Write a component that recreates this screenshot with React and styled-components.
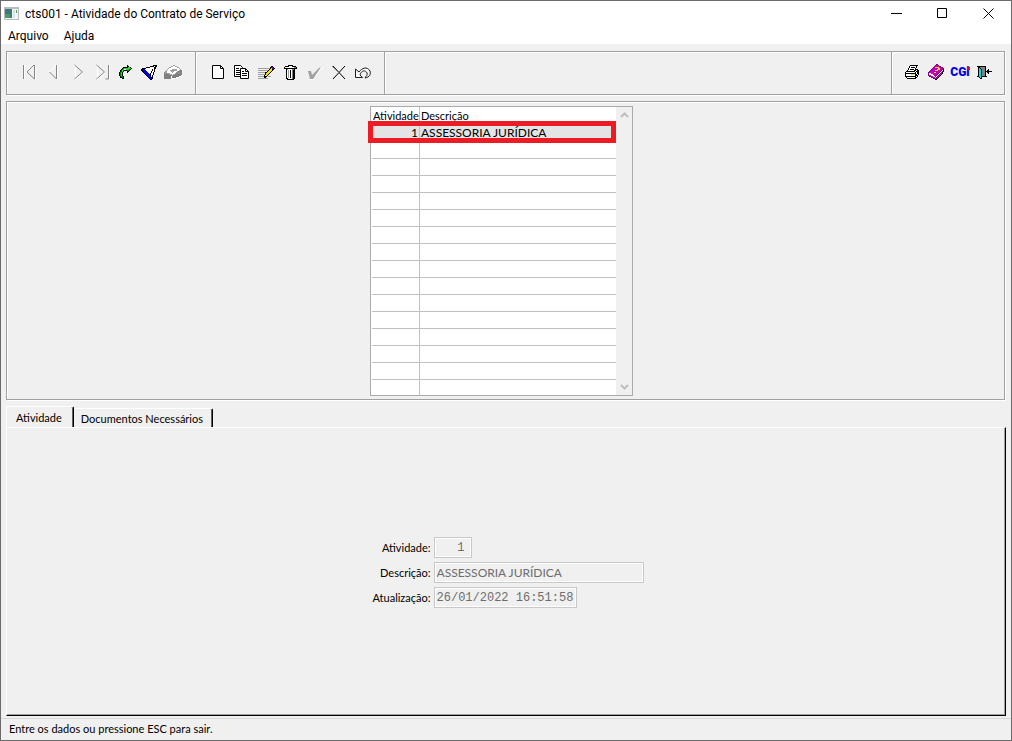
import React, {useState} from 'react'
import styled, {createGlobalStyle} from "styled-components"

const GlobalStyle = createGlobalStyle`
    *, *::before, *::after { box-sizing: border-box; }
    body {
        margin: 0;
        background: #f0f0f0;
        color: #000;
        font-family: Lato, "Liberation Sans", sans-serif;
        font-size: 11px;
    }
    button, input { font: inherit; color: inherit; }
`

const Window = styled.div`
    display: flex;
    flex-direction: column;
    min-height: 100vh;
    border: 1px solid #6b6b6b;
`
const TitleBar = styled.header`
    display: flex;
    align-items: center;
    height: 25px;
    padding-left: 3px;
    background: #fff;
`
const Title = styled.h1`
    flex: 1;
    margin: 0 0 0 6px;
    font: 400 12px Roboto, sans-serif;
`
const WindowButton = styled.button`
    display: flex;
    align-items: center;
    justify-content: center;
    width: 46px;
    height: 25px;
    padding: 0;
    border: 0;
    background: transparent;
`
const MenuBar = styled.nav`
    display: flex;
    gap: 15px;
    height: 18px;
    padding-left: 7px;
    background: #fff;
`
const MenuItem = styled.button`
    padding: 0;
    border: 0;
    background: transparent;
    font: 400 12px/20px Roboto, sans-serif;
`
const Body = styled.main`
    flex: 1;
    display: flex;
    flex-direction: column;
    padding: 7px 5px 2px 5px;
`
const Toolbar = styled.div`
    display: flex;
    margin-right: 1px;
    border: 1px solid #a0a0a0;
    box-shadow: 1px 1px 0 #fff, inset 1px 1px 0 #fff;
`
const ToolGroup = styled.div`
    display: flex;
    align-items: center;
    height: 42px;
    padding: 0 10px 2px;
    ${p => p.$end
        ? "margin-left: auto; padding: 0 8px 2px; border-left: 1px solid #a0a0a0; box-shadow: inset 1px 0 0 #fff;"
        : "border-right: 1px solid #a0a0a0; box-shadow: 1px 0 0 #fff;"}
`
const ToolButton = styled.button`
    display: flex;
    align-items: center;
    justify-content: center;
    width: 24px;
    height: 24px;
    padding: 0;
    border: 0;
    background: transparent;
`
const Logo = styled.span`
    position: relative;
    color: #0000f0;
    font: 900 12px/24px Roboto, sans-serif;

    &::after {
        content: "";
        position: absolute;
        top: 7px;
        right: 0;
        width: 3px;
        height: 3px;
        background: #f00;
    }
`
const GridPanel = styled.section`
    display: flex;
    justify-content: center;
    margin: 6px 1px 0 0;
    padding: 4px 8px 3px 0;
    border: 1px solid #a0a0a0;
    box-shadow: 1px 1px 0 #fff, inset 1px 1px 0 #fff;
`
const GridBox = styled.div`
    display: flex;
    padding-left: 1px;
    border: 1px solid #a9a9ae;
    background: #fff;
`
const Grid = styled.table`
    width: 244px;
    table-layout: fixed;
    border-collapse: separate;
    border-spacing: 0;
    line-height: 16px;

    th, td {
        height: 17px;
        padding: 0 0 0 1px;
        border-bottom: 1px solid #c0c0c0;
        font-weight: 400;
        text-align: left;
        white-space: nowrap;
    }
    th { height: 18px; }
    td { font-size: 12px; }
    th:first-child, td:first-child { width: 48px; border-right: 1px solid #c0c0c0; }
    td:first-child { padding-right: 1px; text-align: right; }
    tbody tr:last-child td { height: 15px; line-height: 15px; border-bottom: 0; }
`
const Row = styled.tr`
    position: relative;
    z-index: ${p => p.$marked ? 1 : 0};
    background: ${p => p.$marked ? "#e4e4e4" : "#fff"};
`
const Marker = styled.span`
    position: absolute;
    top: -4px;
    right: 0;
    bottom: -1px;
    left: -4px;
    border: 5px solid #ed1c24;
    pointer-events: none;
`
const ScrollBar = styled.div`
    display: flex;
    flex-direction: column;
    justify-content: space-between;
    width: 16px;
    background: #f0f0f0;
`
const ScrollButton = styled.button`
    display: flex;
    align-items: center;
    justify-content: center;
    height: 17px;
    padding: 0;
    border: 0;
    background: transparent;
`
const Tabs = styled.div`
    display: flex;
    align-items: flex-end;
    margin-top: 6px;
`
const Tab = styled.button`
    height: ${p => p.$active ? 22 : 19}px;
    margin-bottom: ${p => p.$active ? -1 : 0}px;
    padding: ${p => p.$active ? "0 11px 0 9px" : "0 9px 0 7px"};
    border: solid;
    border-width: 1px 1px 0 ${p => p.$active ? 1 : 0}px;
    border-color: #fff #000 #fff #fff;
    border-radius: 2px 2px 0 0;
    box-shadow: inset -1px 0 0 #606060;
    background: #f0f0f0;
    line-height: 19px;
    white-space: nowrap;
`
const TabPanel = styled.section`
    flex: 1;
    display: flex;
    align-items: center;
    justify-content: center;
    padding: 2px 0 0 4px;
    border: 1px solid;
    border-color: #fff #000 #000 #fff;
    box-shadow: inset -1px -1px 0 #a0a0a0;
`
const Form = styled.form`
    display: grid;
    grid-template-columns: auto 210px;
    gap: 4px 3px;
    align-items: center;
`
const Label = styled.label`
    text-align: right;
    white-space: nowrap;
`
const Field = styled.input`
    width: ${p => p.$width}px;
    height: 21px;
    padding: 0 2px;
    border: 1px solid #c8c8c8;
    box-shadow: inset 0 0 0 1px #fff;
    border-radius: 0;
    background: #f0f0f0;
    color: #6d6d6d;
    font-size: 12px;
    ${p => p.$mono && `font-family: "Liberation Mono", monospace;`}
    ${p => p.$right && "padding-right: 6px; text-align: right;"}
`
const StatusBar = styled.footer`
    height: 22px;
    padding-left: 8px;
    border-top: 1px solid #d7d7d7;
    line-height: 20px;
`

const COLORS = {
    k: "#000", w: "#fff", g: "#808080", s: "#a0a0a0", b: "#0000f0", n: "#008000",
    l: "#30d030", y: "#f0e000", m: "#c000c0", p: "#800080", c: "#00e0e0",
}

// draws rows of colour letters, one letter per pixel
const Bitmap = ({rows}) => {
    const width = Math.max(...rows.map(r => r.length))
    const rects = []
    rows.forEach((row, y) => {
        for (let x = 0; x < row.length;) {
            let end = x + 1
            while (row[end] === row[x]) end++
            if (COLORS[row[x]]) {
                rects.push(<rect key={x + "-" + y} x={x} y={y} width={end - x} height="1" fill={COLORS[row[x]]} />)
            }
            x = end
        }
    })
    return <svg width={width} height={rows.length} shapeRendering="crispEdges" aria-hidden="true">{rects}</svg>
}

const Svg = ({size = 24, children}) => (
    <svg width={size} height={size} viewBox={`0 0 ${size} ${size}`} fill="none" aria-hidden="true">{children}</svg>
)

const REDO = [
    "........k....",
    "........kk...",
    "....kkkkkllk.",
    "...knlllllllk",
    "..knlwwlllnk.",
    ".knlnkkknnk..",
    ".knlk...kk...",
    "knlk....k....",
    "knlk.........",
    "knlk.........",
    "knlk.........",
    ".knnk........",
    ".kknk........",
    "...kk........",
]
const FILTER = [
    "............kkkk",
    ".........kkkkwkk",
    ".....kkkkwwwwkk.",
    ".kkkkwwwwwwwwkk.",
    "kkbbwwwwwwwkwk..",
    "kkbbbwwwwwwkwk..",
    ".kkbbbwwwwkwwk..",
    "..kbbbbwwwkwk...",
    "...kbbbbwkwwk...",
    "....kbbbbkwwk...",
    ".....kbbbkwk....",
    "......kbbbwk....",
    ".......kbbkk....",
    "........kbbk....",
    ".........kk.....",
]
const BOX = [
    ".........ss.......",
    ".......sswwss.....",
    ".....sswwwwwwss...",
    "....swwwwwwwwwws..",
    "...swwwwssssswwws.",
    "..swwwssssssswwsgg",
    ".sswwwwssswwwsgggg",
    "ssswwwwwswwwsggsgg",
    "gsgssswwwwwsggsggg",
    "gggggssswssggggggg",
    "ggggggggsggggggggw",
    "gggggggwgggggggww.",
    "gggggggwggggwww...",
    "gggggggwwww.......",
]
const EDIT = [
    ".............kk.",
    "............kppk",
    "sssssssssssskyppk",
    "...........kyykk",
    "sssssssssskyyyk.",
    ".........kyyyk..",
    "ssssssskkyyyk...",
    ".......kyyyk....",
    "ssssssskyyk.....",
    "......kwyk......",
    "sssssskkk.sss...",
    "......kk........",
    "ssssssssss......",
]
const TRASH = [
    "....kkkkk....",
    ".kkkkwwwkkkk.",
    "kwwwwwwwwwggk",
    "kkkkkkkkkkkkk",
    "..kswwwwggk..",
    "..kwswkwgkk..",
    "..kwswkwgkk..",
    "..kwswkwgkk..",
    "..kwswkwgkk..",
    "..kwswkwgkk..",
    "..kwswkwgkk..",
    "..kwswkwgkk..",
    "..kwswkwgkk..",
    "..kkwwwwgkk..",
    "...kkkkkkk...",
]
const PRINT = [
    ".....kkkkkkkk.",
    "....kwwwwwwk..",
    "....kwkkkkwk..",
    "...kwwwwwwk...",
    "...kwkkkkwkkk.",
    "..kwwwwwwkkwkk",
    ".kkkkkkkkkwkkk",
    "kwwwwwwwwwkwkk",
    "kkkkkkkkkkkwkk",
    "kwwwwwyyywkkwk",
    "kwwwwwwwwwkkk.",
    "kkkkkkkkkkkwk.",
    ".kwwwwwwwwkk..",
    "..kkkkkkkkk...",
]
const HELP = [
    "........pp......",
    ".......pmmp.....",
    "......pmmmmpp...",
    ".....pmyyyymmpp.",
    "....pmmmmmyymmmp",
    "...pmmmmmyyymmpk",
    "..pmmmmyyymmmpwk",
    ".pmmmmmmmmmmpwpk",
    "pmmmmmyymmmpwpk.",
    "pwwmmmmmmmpwpmk.",
    "pwwwwmmmmpwpmk..",
    "pmmwwwmmpwpmk...",
    ".ppmmwwpwpmk....",
    "...ppmmwpmk.....",
    ".....ppmpk......",
    ".......kk.......",
]
const EXIT = [
    "kkkkkkkkk......",
    ".kkgggggk......",
    ".kckggggk......",
    ".kcckgggk..k...",
    ".kcckgggk.kk...",
    ".kcckgggkkkkkkk",
    ".kcckgggk.kk...",
    ".kcckgggk..k...",
    ".kcckgggk......",
    ".kcckgggk......",
    "kkcckkkkkk.....",
    "..kck..........",
    "...kk..........",
]

const First = () => <Svg><path d="M7.5 5v14M9 12h1l8-7" stroke="#fff" /><path d="M6.5 5v14M17.5 5v14L10 12l7-7" stroke="#858585" /><path d="M18.5 5v15" stroke="#fff" /></Svg>
const Prev = () => <Svg><path d="M8 12l7-7" stroke="#fff" /><path d="M15.5 5v14L8.5 12" stroke="#858585" /><path d="M16.5 5v15" stroke="#fff" /></Svg>
const Next = () => <Svg><path d="M10.5 5v14" stroke="#fff" /><path d="M9.5 5l8 7-8 7" stroke="#858585" /><path d="M10 20l8-7" stroke="#fff" /></Svg>
const Last = () => <Svg><path d="M8.5 5v14" stroke="#fff" /><path d="M7.5 5l8 7-8 7M19.5 5v14h-3" stroke="#858585" /><path d="M8 20l8-7M20.5 5v15" stroke="#fff" /></Svg>
const NewPage = () => <Svg><path d="M6.5 5.5h8l3 3v10h-11z" fill="#fff" stroke="#000" /><path d="M14.5 5.5v3h3" stroke="#000" /></Svg>
const Copy = () => (
    <Svg>
        <path d="M4.5 5.5h6l2 2v9h-8z" fill="#fff" stroke="#000" />
        <path d="M6 8.5h3M6 10.5h4M6 12.5h4M6 14.5h4" stroke="#000" />
        <path d="M10.5 8.5h5l3 3v7h-8z" fill="#fff" stroke="#000" />
        <path d="M15.5 8.5v3h3M12 11.5h2M12 13.5h5M12 15.5h5" stroke="#000" />
    </Svg>
)
const Confirm = () => <Svg><path d="M8 19l3 1 9-13" stroke="#fff" /><path d="M6 11h3l1 4 7-7 2-1-8 12h-3z" fill="#a0a0a0" /></Svg>
const Cancel = () => <Svg><path d="M7 6l12 13M7 19L19 6" stroke="#000" /><path d="M6 6l7 7" stroke="#808080" /></Svg>
const Undo = () => <Svg><path d="M5.5 9v8.5h7L10 15c1-5 6-5 7-2 1 2-1 3-2 5 5-1 6-4 5-7-3-5-8-3-11 1z" fill="#f8f8f8" stroke="#202020" /></Svg>

const navTools = [
    ["Primeiro", <First />], ["Anterior", <Prev />], ["Próximo", <Next />], ["Último", <Last />],
    ["Atualizar", <Bitmap rows={REDO} />], ["Filtrar", <Bitmap rows={FILTER} />], ["Arquivar", <Bitmap rows={BOX} />],
]
const editTools = [
    ["Novo", <NewPage />], ["Copiar", <Copy />], ["Editar", <Bitmap rows={EDIT} />], ["Excluir", <Bitmap rows={TRASH} />],
    ["Confirmar", <Confirm />], ["Cancelar", <Cancel />], ["Desfazer", <Undo />],
]
const endTools = [
    ["Imprimir", <Bitmap rows={PRINT} />], ["Manual", <Bitmap rows={HELP} />],
    ["CGi", <Logo>CGi</Logo>], ["Sair", <Bitmap rows={EXIT} />],
]

const Tools = ({items, end}) => (
    <ToolGroup $end={end}>
        {items.map(([label, icon]) => <ToolButton key={label} type="button" aria-label={label}>{icon}</ToolButton>)}
    </ToolGroup>
)

const rows = [{id: 1, name: "ASSESSORIA JURÍDICA"}, ...Array(15).fill({})]

const App = () => {
    const [tab, setTab] = useState(0)

    return (
        <Window>
            <GlobalStyle />
            <TitleBar>
                <svg width="15" height="13" shapeRendering="crispEdges" aria-hidden="true">
                    <rect width="15" height="13" fill="#b8bcc0" />
                    <rect x="1" y="2" width="13" height="10" fill="#f4f8f8" />
                    <rect x="1" y="2" width="7" height="9" fill="#3a7a78" />
                    <rect x="1" y="7" width="5" height="4" fill="#4c9a68" />
                    <rect x="9" y="3" width="2" height="8" fill="#d4e6e6" />
                    <rect x="12" y="3" width="1" height="3" fill="#50a070" />
                </svg>
                <Title>cts001 - Atividade do Contrato de Serviço</Title>
                <WindowButton type="button" aria-label="Minimizar"><Svg size={11}><path d="M0 5.5h11" stroke="#000" /></Svg></WindowButton>
                <WindowButton type="button" aria-label="Maximizar"><Svg size={11}><path d="M.5.5h9v9h-9z" stroke="#000" /></Svg></WindowButton>
                <WindowButton type="button" aria-label="Fechar"><Svg size={11}><path d="M.5.5l10 10M10.5.5l-10 10" stroke="#000" /></Svg></WindowButton>
            </TitleBar>
            <MenuBar>
                <MenuItem type="button">Arquivo</MenuItem>
                <MenuItem type="button">Ajuda</MenuItem>
            </MenuBar>
            <Body>
                <Toolbar>
                    <Tools items={navTools} />
                    <Tools items={editTools} />
                    <Tools items={endTools} end />
                </Toolbar>
                <GridPanel>
                    <GridBox>
                        <Grid>
                            <thead>
                                <tr><th>Atividade</th><th>Descrição</th></tr>
                            </thead>
                            <tbody>
                                {rows.map((row, i) => (
                                    <Row key={i} $marked={i === 0}>
                                        <td>{row.id}{i === 0 && <Marker />}</td>
                                        <td>{row.name}</td>
                                    </Row>
                                ))}
                            </tbody>
                        </Grid>
                        <ScrollBar>
                            <ScrollButton type="button" aria-label="Subir"><Svg size={9}><path d="M1 6l3.5-3.5L8 6" stroke="#bfbfbf" strokeWidth="2" /></Svg></ScrollButton>
                            <ScrollButton type="button" aria-label="Descer"><Svg size={9}><path d="M1 3l3.5 3.5L8 3" stroke="#bfbfbf" strokeWidth="2" /></Svg></ScrollButton>
                        </ScrollBar>
                    </GridBox>
                </GridPanel>
                <Tabs role="tablist">
                    <Tab type="button" role="tab" aria-selected={tab === 0} $active={tab === 0} onClick={() => setTab(0)}>Atividade</Tab>
                    <Tab type="button" role="tab" aria-selected={tab === 1} $active={tab === 1} onClick={() => setTab(1)}>Documentos Necessários</Tab>
                </Tabs>
                <TabPanel role="tabpanel">
                    {tab === 0 && (
                        <Form>
                            <Label htmlFor="atividade">Atividade:</Label>
                            <Field id="atividade" $width={38} $mono $right readOnly value="1" />
                            <Label htmlFor="descricao">Descrição:</Label>
                            <Field id="descricao" $width={210} readOnly value="ASSESSORIA JURÍDICA" />
                            <Label htmlFor="atualizacao">Atualização:</Label>
                            <Field id="atualizacao" $width={143} $mono readOnly value="26/01/2022 16:51:58" />
                        </Form>
                    )}
                </TabPanel>
            </Body>
            <StatusBar>Entre os dados ou pressione ESC para sair.</StatusBar>
        </Window>
    )
}

export default App
